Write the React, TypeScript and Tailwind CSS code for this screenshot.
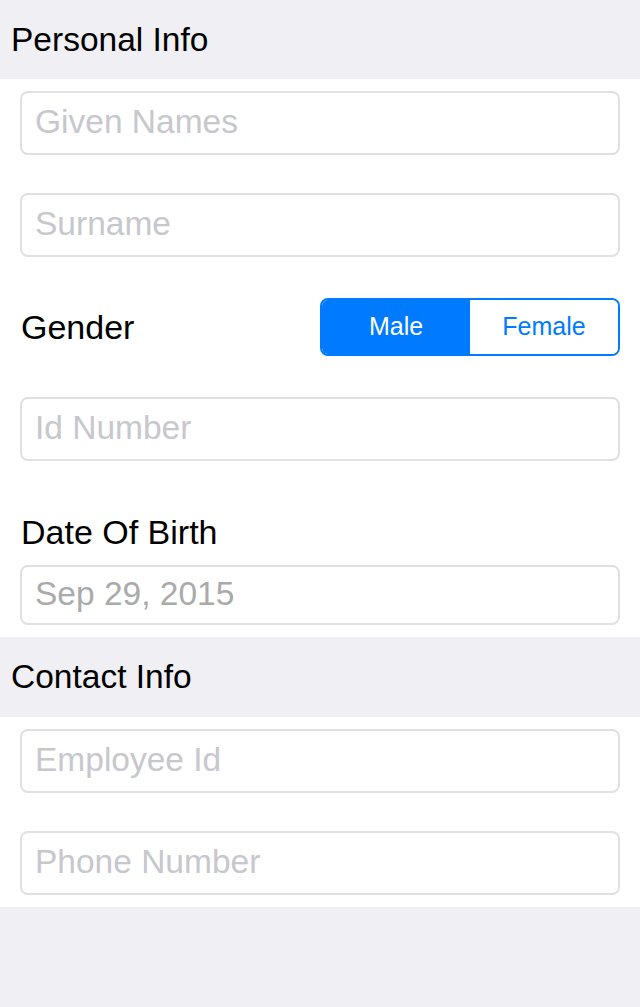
import React from "react";

const font = { fontFamily: '"Liberation Sans", Arial, sans-serif' };

function Field({ placeholder }: { placeholder: string }) {
  return (
    <div className="flex h-[64px] items-center rounded-[8px] border-2 border-[#e0e0e0] bg-white pb-[3px] pl-[13px]">
      <span className="text-[33.5px] leading-none text-[#c7c7cd]">{placeholder}</span>
    </div>
  );
}

function Header({ title, h }: { title: string; h: string }) {
  return (
    <div className={`flex items-center bg-[#efeff4] pl-[11px] ${h}`}>
      <span className="text-[33.5px] leading-none text-black">{title}</span>
    </div>
  );
}

export default function App() {
  return (
    <div className="min-h-screen bg-[#efeff4]" style={font}>
      <Header title="Personal Info" h="h-[79px]" />
      <div className="flex flex-col bg-white px-[20px] pt-[12px] pb-[12px]">
        <Field placeholder="Given Names" />
        <div className="h-[38px]" />
        <Field placeholder="Surname" />
        <div className="mt-[41px] flex items-center justify-between pl-[1px]">
          <span className="text-[34px] leading-none text-black">Gender</span>
          <div className="flex h-[58px] w-[300px] overflow-hidden rounded-[8px] border-2 border-[#007aff]">
            <div className="flex w-1/2 items-center justify-center bg-[#007aff] text-[25px] text-white">
              Male
            </div>
            <div className="flex w-1/2 items-center justify-center bg-white text-[25px] text-[#007aff]">
              Female
            </div>
          </div>
        </div>
        <div className="h-[41px]" />
        <Field placeholder="Id Number" />
        <div className="mt-[51px] flex h-[40px] items-center pl-[1px]">
          <span className="text-[34px] leading-none text-black">Date Of Birth</span>
        </div>
        <div className="mt-[13px] flex h-[60px] items-center rounded-[8px] border-2 border-[#e0e0e0] bg-white pb-[2px] pl-[13px]">
          <span className="text-[33.5px] leading-none text-[#aaaaaa]">Sep 29, 2015</span>
        </div>
      </div>
      <Header title="Contact Info" h="h-[80px]" />
      <div className="flex flex-col bg-white px-[20px] pt-[12px] pb-[12px]">
        <Field placeholder="Employee Id" />
        <div className="h-[38px]" />
        <Field placeholder="Phone Number" />
      </div>
    </div>
  );
}
